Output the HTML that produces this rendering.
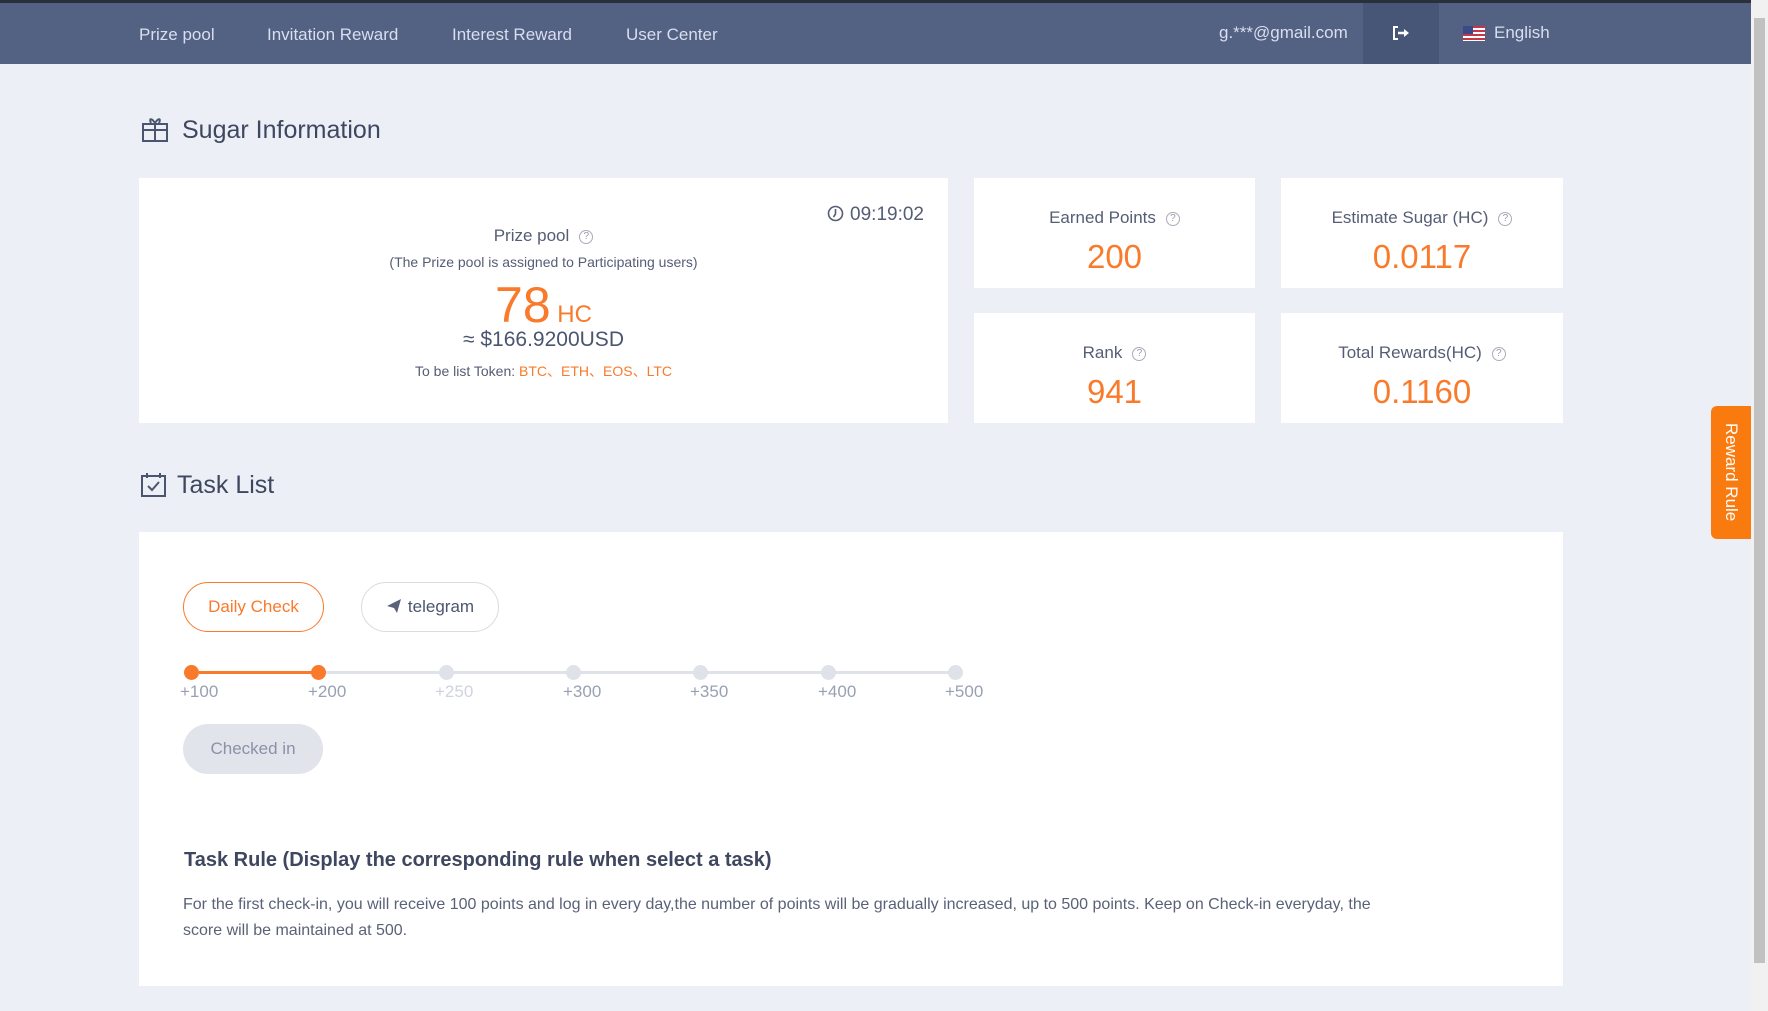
<!DOCTYPE html>
<html><head><meta charset="utf-8"><style>
*{margin:0;padding:0;box-sizing:border-box}
body{width:1768px;height:1011px;overflow:hidden;background:#eceff6;font-family:"Liberation Sans",sans-serif;position:relative;color:#4b5570}
.abs{position:absolute}
.nav{left:0;top:0;width:1751px;height:64px;background:#536182;border-top:3px solid #2b2f3a}
.nav span{position:absolute;top:22px;color:#d9def0;font-size:17px}
.card{background:#fff;position:absolute}
.lbl{position:absolute;width:100%;text-align:center;font-size:17px;color:#555d75}
.val{position:absolute;width:100%;text-align:center;font-size:33px;color:#f97a2b}
.q{display:inline-block;width:14px;height:14px;border:1px solid #aab;border-radius:50%;font-size:10px;line-height:12px;text-align:center;color:#99a;vertical-align:middle;margin-left:10px}
.or{color:#f97a2b}
.dot{position:absolute;top:665px;width:15px;height:15px;border-radius:50%;background:#e0e2ea}
.pl{position:absolute;top:682px;font-size:17px;color:#9aa0b4}
</style></head><body>
<div class="abs nav">
<span style="left:139px">Prize pool</span>
<span style="left:267px">Invitation Reward</span>
<span style="left:452px">Interest Reward</span>
<span style="left:626px">User Center</span>
<span style="left:1219px;top:20px">g.***@gmail.com</span>
<div class="abs" style="left:1363px;top:0;width:76px;height:61px;background:#475577"></div>
<svg class="abs" style="left:1392px;top:22px" width="18" height="16" viewBox="0 0 18 16"><path d="M6 2H2v12h4" stroke="#fff" stroke-width="2" fill="none"/><path d="M6 8h7" stroke="#fff" stroke-width="2.5"/><path d="M12 4l5 4-5 4z" fill="#fff"/></svg>
<svg class="abs" style="left:1463px;top:23px" width="22" height="15"><rect width="22" height="15" fill="#fff"/><g fill="#c4364a"><rect y="0" width="22" height="2"/><rect y="4" width="22" height="2"/><rect y="8" width="22" height="2"/><rect y="12" width="22" height="2"/></g><rect width="10" height="8" fill="#3b4a8a"/></svg>
<span style="left:1494px;top:20px">English</span>
</div>
<div class="abs" style="left:1751px;top:0;width:17px;height:1011px;background:#f1f1f1"></div>
<div class="abs" style="left:1754px;top:18px;width:11px;height:945px;background:#c1c1c1"></div>

<svg class="abs" style="left:141px;top:115px" width="28" height="28" viewBox="0 0 28 28" fill="none" stroke="#4b5570" stroke-width="2"><rect x="2" y="9" width="24" height="17"/><path d="M2 15h24M14 9v17"/><path d="M10 8c-2-4 0-6 4 0c4-6 6-4 4 0"/></svg>
<div class="abs" style="left:182px;top:116px;font-size:25px;color:#3f4760">Sugar Information</div>

<div class="card" style="left:139px;top:178px;width:809px;height:245px">
<div class="abs" style="right:24px;top:26px;font-size:19px;color:#555d75"><svg width="17" height="17" style="vertical-align:-2px;margin-right:6px" viewBox="0 0 17 17" fill="none" stroke="#555d75" stroke-width="1.6"><circle cx="8.5" cy="8.5" r="7"/><path d="M8.5 4v5l-2 3"/></svg>09:19:02</div>
<div class="lbl" style="top:48px">Prize pool<span class="q">?</span></div>
<div class="lbl" style="top:76px;font-size:14px">(The Prize pool is assigned to Participating users)</div>
<div class="lbl or" style="top:98px;font-size:50px">78<span style="font-size:24px"> HC</span></div>
<div class="lbl" style="top:150px;font-size:21px;color:#4b5570">≈ $166.9200USD</div>
<div class="lbl" style="top:183px;font-size:14px">To be list Token: <span class="or">BTC、ETH、EOS、LTC</span></div>
</div>

<div class="card" style="left:974px;top:178px;width:281px;height:110px"><div class="lbl" style="top:30px">Earned Points<span class="q">?</span></div><div class="val" style="top:60px">200</div></div>
<div class="card" style="left:1281px;top:178px;width:282px;height:110px"><div class="lbl" style="top:30px">Estimate Sugar (HC)<span class="q">?</span></div><div class="val" style="top:60px">0.0117</div></div>
<div class="card" style="left:974px;top:313px;width:281px;height:110px"><div class="lbl" style="top:30px">Rank<span class="q">?</span></div><div class="val" style="top:60px">941</div></div>
<div class="card" style="left:1281px;top:313px;width:282px;height:110px"><div class="lbl" style="top:30px">Total Rewards(HC)<span class="q">?</span></div><div class="val" style="top:60px">0.1160</div></div>

<svg class="abs" style="left:140px;top:472px" width="27" height="26" viewBox="0 0 27 26" fill="none" stroke="#4b5570" stroke-width="2"><rect x="2" y="4" width="23" height="20"/><path d="M7 1v5M20 1v5M8 14l4 4 7-8"/></svg>
<div class="abs" style="left:177px;top:471px;font-size:25px;color:#3f4760">Task List</div>

<div class="card" style="left:139px;top:532px;width:1424px;height:454px"></div>
<div class="abs" style="left:183px;top:582px;width:141px;height:50px;border:1px solid #f97a2b;border-radius:25px;color:#f97a2b;font-size:17px;text-align:center;line-height:48px">Daily Check</div>
<div class="abs" style="left:361px;top:582px;width:138px;height:50px;border:1px solid #d8dbe4;border-radius:25px;color:#4b5570;font-size:17px;text-align:center;line-height:48px"><svg width="16" height="16" viewBox="0 0 16 16" style="vertical-align:-2px;margin-right:6px"><path d="M1 8L15 1 11 15 8 10z" fill="#5a6278"/></svg>telegram</div>

<div class="abs" style="left:199px;top:671px;width:757px;height:3px;background:#e0e2ea"></div>
<div class="abs" style="left:199px;top:671px;width:120px;height:3px;background:#f97a2b"></div>
<div class="dot" style="left:184px;background:#f97a2b"></div>
<div class="dot" style="left:311px;background:#f97a2b"></div>
<div class="dot" style="left:439px"></div><div class="dot" style="left:566px"></div><div class="dot" style="left:693px"></div><div class="dot" style="left:821px"></div><div class="dot" style="left:948px"></div>
<div class="pl or" style="left:180px">+100</div>
<div class="pl or" style="left:308px">+200</div>
<div class="pl" style="left:435px;color:#d0d3dc">+250</div>
<div class="pl" style="left:563px">+300</div>
<div class="pl" style="left:690px">+350</div>
<div class="pl" style="left:818px">+400</div>
<div class="pl" style="left:945px">+500</div>

<div class="abs" style="left:183px;top:724px;width:140px;height:50px;background:#e2e4ec;border-radius:25px;color:#8b92a6;font-size:17px;text-align:center;line-height:50px">Checked in</div>

<div class="abs" style="left:184px;top:849px;font-size:20px;font-weight:bold;color:#3f4760">Task Rule (Display the corresponding rule when select a task)</div>
<div class="abs" style="left:183px;top:892px;width:1195px;font-size:16px;line-height:26px;color:#5a6278">For the first check-in, you will receive 100 points and log in every day,the number of points will be gradually increased, up to 500 points. Keep on Check-in everyday, the score will be maintained at 500.</div>

<div class="abs" style="left:1711px;top:406px;width:40px;height:133px;background:#f97a0f;border-radius:6px 0 0 6px"></div>
<div class="abs" style="left:1711px;top:406px;width:40px;height:133px;color:#fff;font-size:17px;writing-mode:vertical-rl;text-align:center;line-height:40px">Reward Rule</div>
</body></html>
